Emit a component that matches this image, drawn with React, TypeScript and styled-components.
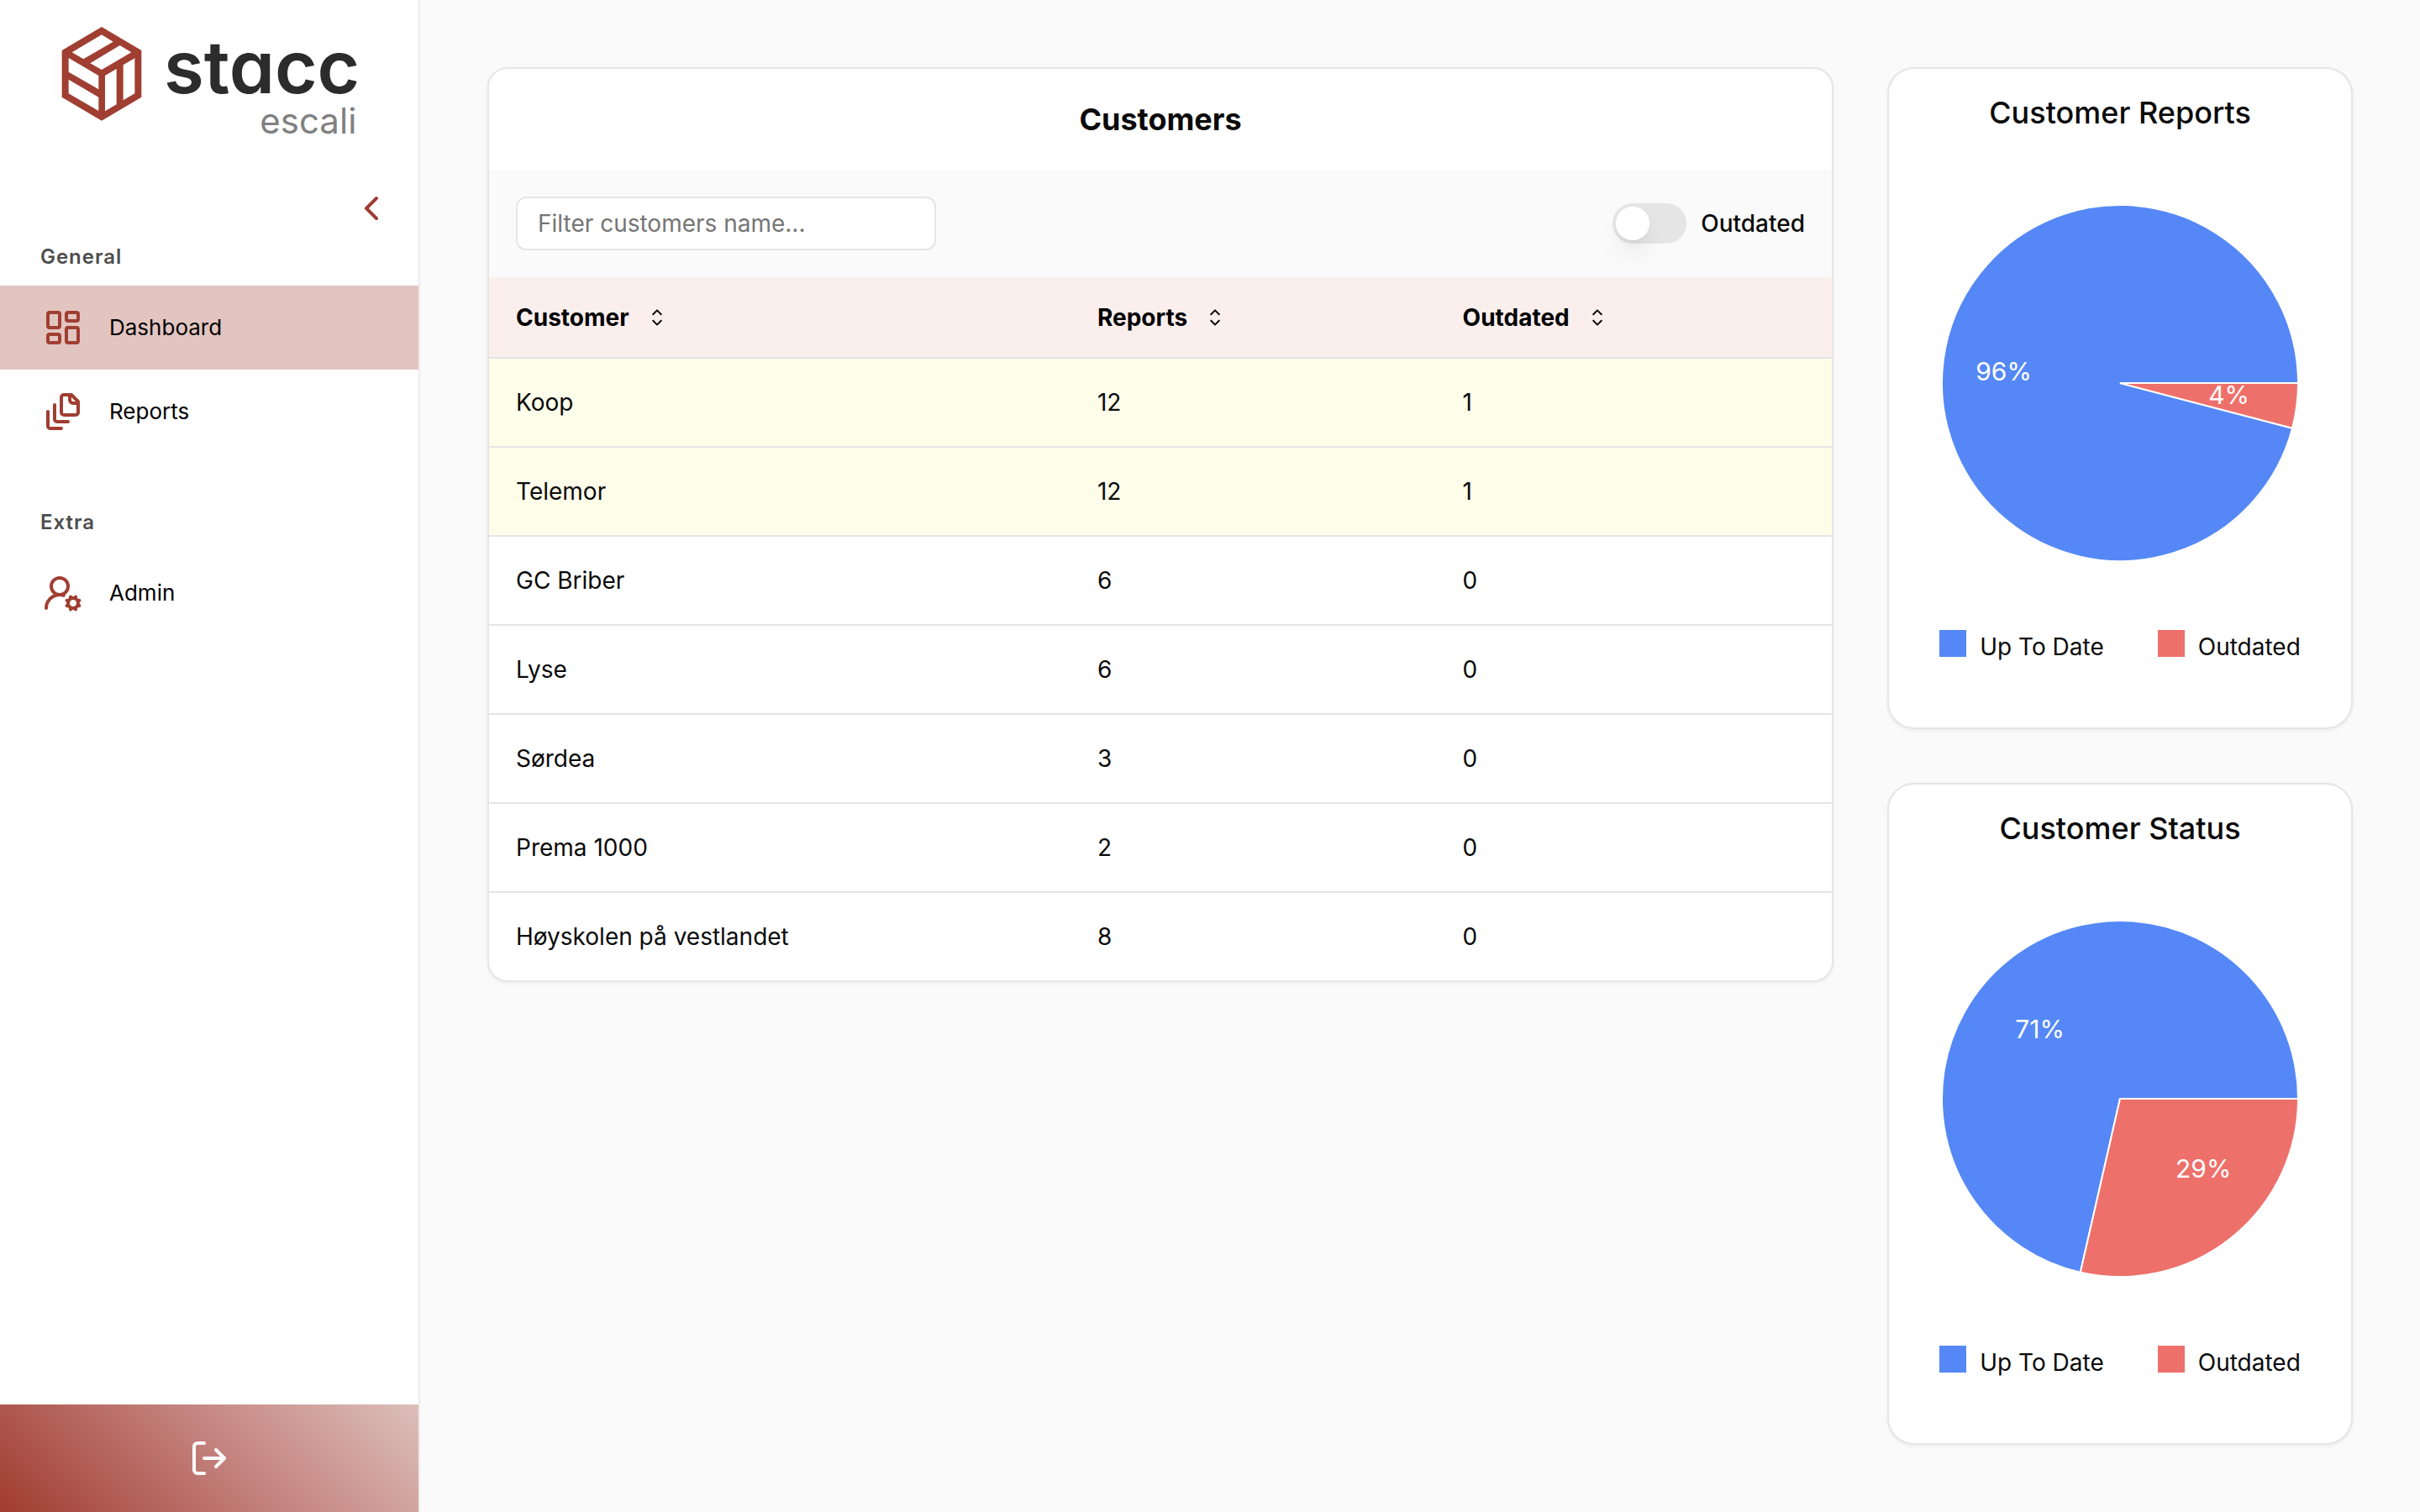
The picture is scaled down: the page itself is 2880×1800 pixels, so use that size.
import React, { useState } from "react";
import styled, { createGlobalStyle } from "styled-components";
import { ChevronLeft, LayoutDashboard, LogOut, UserRoundCog } from "lucide-react";

const color = {
  brand: "#a03e32",
  brandSoft: "#e2c5c1",
  page: "#fafafa",
  surface: "#ffffff",
  line: "#e5e5e5",
  ink: "#0a0a0a",
  muted: "#757575",
  blue: "#5588f6",
  red: "#ee706b",
};

const GlobalStyle = createGlobalStyle`
  *, *::before, *::after { box-sizing: border-box; }
  body {
    margin: 0;
    background: ${color.page};
    color: ${color.ink};
    font-family: Inter, "Liberation Sans", sans-serif;
    font-size: 28px;
    line-height: 40px;
  }
  button, input { font: inherit; color: inherit; }
  button { margin: 0; padding: 0; border: 0; background: none; cursor: pointer; }
`;

const Layout = styled.div`
  display: grid;
  grid-template-columns: 500px minmax(0, 1fr);
  min-height: 100vh;
`;

/* ---------- sidebar ---------- */

const Sidebar = styled.aside`
  display: flex;
  flex-direction: column;
  position: sticky;
  top: 0;
  height: 100vh;
  background: ${color.surface};
  border-right: 2px solid #ededed;
`;

const Brand = styled.a`
  display: flex;
  align-items: flex-start;
  gap: 26px;
  height: 224px;
  padding: 32px 0 0 73px;
  color: inherit;
  text-decoration: none;
`;

const Wordmark = styled.span`
  display: flex;
  flex-direction: column;
  align-items: flex-end;
  padding-top: 8px;
`;

const BrandName = styled.span`
  font-size: 87px;
  font-weight: 600;
  line-height: 80px;
  color: #2c2c2c;
  font-feature-settings: "cv11";
`;

const BrandProduct = styled.span`
  font-size: 42px;
  line-height: 48px;
  padding-right: 4px;
  color: #808080;
`;

const CollapseRow = styled.div`
  display: flex;
  justify-content: flex-end;
  padding-right: 32px;
`;

const IconButton = styled.button`
  display: flex;
  color: ${color.brand};
`;

const Nav = styled.nav`
  display: flex;
  flex-direction: column;
  gap: 48px;
  flex: 1;
`;

const SectionTitle = styled.h2`
  margin: 0;
  padding: 17px 48px;
  font-size: 24px;
  font-weight: 600;
  line-height: 34px;
  letter-spacing: 0.04em;
  color: #4d4d4d;
`;

const NavLink = styled.a<{ $active?: boolean }>`
  display: flex;
  align-items: center;
  gap: 31px;
  height: 100px;
  padding: 0 51px;
  font-size: 26px;
  color: #000;
  text-decoration: none;
  background: ${(p) => (p.$active ? color.brandSoft : "transparent")};

  svg { color: ${color.brand}; }
`;

const LogoutButton = styled.button`
  display: flex;
  align-items: center;
  justify-content: center;
  height: 128px;
  color: #fff;
  background: linear-gradient(45deg, #a03c30, #c3807b 52%, #dcbfbb);
`;

/* ---------- customers table ---------- */

const Main = styled.main`
  display: grid;
  grid-template-columns: minmax(0, 1fr) 554px;
  align-items: start;
  gap: 64px;
  padding: 80px;
`;

const TableCard = styled.section`
  overflow: hidden;
  background: ${color.surface};
  border: 2px solid ${color.line};
  border-radius: 24px;
  box-shadow: 0 2px 4px rgba(0, 0, 0, 0.05);
`;

const TableTitle = styled.h1`
  margin: 0;
  padding: 36px 32px;
  font-size: 36px;
  font-weight: 700;
  line-height: 48px;
  text-align: center;
`;

const Toolbar = styled.div`
  display: flex;
  align-items: center;
  justify-content: space-between;
  padding: 32px;
  background: ${color.page};
`;

const FilterInput = styled.input`
  width: 500px;
  height: 64px;
  padding: 0 24px;
  border: 2px solid ${color.line};
  border-radius: 12px;
  background: ${color.surface};

  &::placeholder { color: ${color.muted}; opacity: 1; }
`;

const SwitchField = styled.label`
  display: flex;
  align-items: center;
  gap: 17px;
  font-weight: 500;
  cursor: pointer;
`;

const Switch = styled.input`
  appearance: none;
  display: flex;
  width: 88px;
  height: 48px;
  margin: 0;
  padding: 4px;
  border-radius: 24px;
  background: ${color.line};
  cursor: pointer;

  &::before {
    content: "";
    width: 40px;
    height: 40px;
    border-radius: 50%;
    background: #fff;
    box-shadow: 0 20px 30px -6px rgba(0, 0, 0, 0.1), 0 8px 12px -8px rgba(0, 0, 0, 0.1);
  }
  &:checked { justify-content: flex-end; background: ${color.brand}; }
`;

const Table = styled.table`
  width: 100%;
  border-collapse: separate;
  border-spacing: 0;
  table-layout: fixed;
`;

const HeadCell = styled.th<{ $share: string }>`
  width: ${(p) => p.$share};
  height: 97px;
  padding: 0 32px;
  border-bottom: 2px solid ${color.line};
  background: #fbefee;
  color: #000;
  font-weight: 700;
  text-align: left;
`;

const SortButton = styled.button`
  display: flex;
  align-items: center;
  gap: 17px;
`;

const Row = styled.tr<{ $flagged: boolean }>`
  background: ${(p) => (p.$flagged ? "#fefdea" : color.surface)};

  &:not(:last-child) td { border-bottom: 2px solid ${color.line}; }
`;

const Cell = styled.td`
  padding: 32px;
`;

/* ---------- charts ---------- */

const ChartColumn = styled.div`
  display: flex;
  flex-direction: column;
  gap: 64px;
`;

const ChartCard = styled.section`
  display: flex;
  flex-direction: column;
  align-items: center;
  padding: 28px 0 76px;
  background: ${color.surface};
  border: 2px solid ${color.line};
  border-radius: 32px;
  box-shadow: 0 2px 4px rgba(0, 0, 0, 0.05);
`;

const ChartTitle = styled.h2`
  margin: 0 0 32px;
  font-size: 36px;
  font-weight: 500;
  line-height: 48px;
`;

const PieLabel = styled.text`
  font-size: 30px;
  fill: #fff;
`;

const Legend = styled.ul`
  display: flex;
  gap: 64px;
  margin: 28px 0 0;
  padding: 0;
  list-style: none;
`;

const LegendItem = styled.li`
  display: flex;
  align-items: flex-start;
  gap: 16px;
`;

const Swatch = styled.span<{ $fill: string }>`
  width: 32px;
  height: 32px;
  background: ${(p) => p.$fill};
`;

const BrandCube = () => (
  <svg width="96" height="112" viewBox="219 96 284 336" aria-hidden="true">
    <path
      fill={color.brand}
      fillRule="evenodd"
      d="M361 96 503 180V347L361 431 219 347V180ZM361 124 402 149 296 211 255 187ZM426 162 467 187 361 249 320 226ZM243 207 350 270V319L243 257ZM243 284 350 347V396L243 334ZM373 270 414 246V373L373 397ZM438 232 479 208V334L438 358Z"
    />
  </svg>
);

const FileStackIcon = () => (
  <svg width="48" height="48" viewBox="0 0 24 24" fill="none" stroke="currentColor" strokeWidth="2" strokeLinecap="round" strokeLinejoin="round" aria-hidden="true">
    <path d="M21 7h-3a2 2 0 0 1-2-2V2" />
    <path d="M21 6v6.5c0 .8-.7 1.5-1.5 1.5h-7c-.8 0-1.5-.7-1.5-1.5v-9c0-.8.7-1.5 1.5-1.5H17Z" />
    <path d="M7 8v8.8c0 .3.2.6.4.8.2.2.5.4.8.4H15" />
    <path d="M3 12v8.8c0 .3.2.6.4.8.2.2.5.4.8.4H11" />
  </svg>
);

const SortIcon = () => (
  <svg width="32" height="32" viewBox="0 0 15 15" fill="currentColor" aria-hidden="true">
    <path d="M4.93179 5.43179C4.75605 5.60753 4.75605 5.89245 4.93179 6.06819C5.10753 6.24392 5.39245 6.24392 5.56819 6.06819L7.49999 4.13638L9.43179 6.06819C9.60753 6.24392 9.89245 6.24392 10.0682 6.06819C10.2439 5.89245 10.2439 5.60753 10.0682 5.43179L7.81819 3.18179C7.73379 3.0974 7.61933 3.04999 7.49999 3.04999C7.38064 3.04999 7.26618 3.0974 7.18179 3.18179L4.93179 5.43179ZM10.0682 9.56819C10.2439 9.39245 10.2439 9.10753 10.0682 8.93179C9.89245 8.75606 9.60753 8.75606 9.43179 8.93179L7.49999 10.8636L5.56819 8.93179C5.39245 8.75606 5.10753 8.75606 4.93179 8.93179C4.75605 9.10753 4.75605 9.39245 4.93179 9.56819L7.18179 11.8182C7.35753 11.9939 7.64245 11.9939 7.81819 11.8182L10.0682 9.56819Z" />
  </svg>
);

type Customer = { name: string; reports: number; outdated: number };
type SortKey = keyof Customer;

const customers: Customer[] = [
  { name: "Koop", reports: 12, outdated: 1 },
  { name: "Telemor", reports: 12, outdated: 1 },
  { name: "GC Briber", reports: 6, outdated: 0 },
  { name: "Lyse", reports: 6, outdated: 0 },
  { name: "Sørdea", reports: 3, outdated: 0 },
  { name: "Prema 1000", reports: 2, outdated: 0 },
  { name: "Høyskolen på vestlandet", reports: 8, outdated: 0 },
];

const columns: { key: SortKey; label: string; share: string }[] = [
  { key: "name", label: "Customer", share: "43.3%" },
  { key: "reports", label: "Reports", share: "27.2%" },
  { key: "outdated", label: "Outdated", share: "29.5%" },
];

const SIZE = 532;
const CENTER = SIZE / 2;
const RADIUS = 212;

const pointAt = (angle: number, radius: number) => ({
  x: CENTER + radius * Math.cos(angle),
  y: CENTER - radius * Math.sin(angle),
});

/* Slices run counter-clockwise from three o'clock. */
function PieChart({ title, upToDate, outdated }: { title: string; upToDate: number; outdated: number }) {
  const total = upToDate + outdated;
  let start = 0;
  const slices = [
    { label: "Up To Date", value: upToDate, fill: color.blue },
    { label: "Outdated", value: outdated, fill: color.red },
  ].map((slice) => {
    const end = start + (slice.value / total) * Math.PI * 2;
    const a = pointAt(start, RADIUS);
    const b = pointAt(end, RADIUS);
    const label = pointAt((start + end) / 2, RADIUS / 2);
    const large = end - start > Math.PI ? 1 : 0;
    start = end;
    return {
      ...slice,
      at: label,
      percent: Math.round((slice.value / total) * 100),
      d: `M${CENTER} ${CENTER}L${a.x} ${a.y}A${RADIUS} ${RADIUS} 0 ${large} 0 ${b.x} ${b.y}Z`,
    };
  });

  return (
    <ChartCard>
      <ChartTitle>{title}</ChartTitle>
      <svg width={SIZE} height={SIZE} viewBox={`0 0 ${SIZE} ${SIZE}`} role="img" aria-label={title}>
        {slices.map((s) => (
          <path key={s.label} d={s.d} fill={s.fill} stroke="#fff" strokeWidth="2" />
        ))}
        {slices.map((s) => (
          <PieLabel key={s.label} x={s.at.x} y={s.at.y} textAnchor={s.at.x > CENTER ? "start" : "end"} dominantBaseline="central">
            {`${s.percent}%`}
          </PieLabel>
        ))}
      </svg>
      <Legend>
        {slices.map((s) => (
          <LegendItem key={s.label}>
            <Swatch $fill={s.fill} />
            {s.label}
          </LegendItem>
        ))}
      </Legend>
    </ChartCard>
  );
}

export default function App() {
  const [query, setQuery] = useState("");
  const [onlyOutdated, setOnlyOutdated] = useState(false);
  const [sortKey, setSortKey] = useState<SortKey | null>(null);

  const rows = customers.filter(
    (c) => c.name.toLowerCase().includes(query.toLowerCase()) && (!onlyOutdated || c.outdated > 0)
  );
  if (sortKey) rows.sort((a, b) => (a[sortKey] > b[sortKey] ? 1 : a[sortKey] < b[sortKey] ? -1 : 0));

  return (
    <>
      <GlobalStyle />
      <Layout>
        <Sidebar>
          <Brand href="#">
            <BrandCube />
            <Wordmark>
              <BrandName>stacc</BrandName>
              <BrandProduct>escali</BrandProduct>
            </Wordmark>
          </Brand>
          <CollapseRow>
            <IconButton type="button" aria-label="Collapse sidebar">
              <ChevronLeft size={48} />
            </IconButton>
          </CollapseRow>
          <Nav>
            <div>
              <SectionTitle>General</SectionTitle>
              <NavLink href="#dashboard" $active aria-current="page">
                <LayoutDashboard size={48} />
                Dashboard
              </NavLink>
              <NavLink href="#reports">
                <FileStackIcon />
                Reports
              </NavLink>
            </div>
            <div>
              <SectionTitle>Extra</SectionTitle>
              <NavLink href="#admin">
                <UserRoundCog size={48} />
                Admin
              </NavLink>
            </div>
          </Nav>
          <LogoutButton type="button" aria-label="Log out">
            <LogOut size={48} />
          </LogoutButton>
        </Sidebar>

        <Main>
          <TableCard>
            <TableTitle>Customers</TableTitle>
            <Toolbar>
              <FilterInput
                type="text"
                aria-label="Filter customers"
                placeholder="Filter customers name..."
                value={query}
                onChange={(e) => setQuery(e.target.value)}
              />
              <SwitchField htmlFor="outdated-only">
                <Switch
                  id="outdated-only"
                  type="checkbox"
                  role="switch"
                  checked={onlyOutdated}
                  onChange={(e) => setOnlyOutdated(e.target.checked)}
                />
                Outdated
              </SwitchField>
            </Toolbar>
            <Table>
              <thead>
                <tr>
                  {columns.map((c) => (
                    <HeadCell key={c.key} scope="col" $share={c.share}>
                      <SortButton type="button" onClick={() => setSortKey(c.key)}>
                        {c.label}
                        <SortIcon />
                      </SortButton>
                    </HeadCell>
                  ))}
                </tr>
              </thead>
              <tbody>
                {rows.map((c) => (
                  <Row key={c.name} $flagged={c.outdated > 0}>
                    <Cell>{c.name}</Cell>
                    <Cell>{c.reports}</Cell>
                    <Cell>{c.outdated}</Cell>
                  </Row>
                ))}
              </tbody>
            </Table>
          </TableCard>

          <ChartColumn>
            <PieChart title="Customer Reports" upToDate={47} outdated={2} />
            <PieChart title="Customer Status" upToDate={5} outdated={2} />
          </ChartColumn>
        </Main>
      </Layout>
    </>
  );
}
